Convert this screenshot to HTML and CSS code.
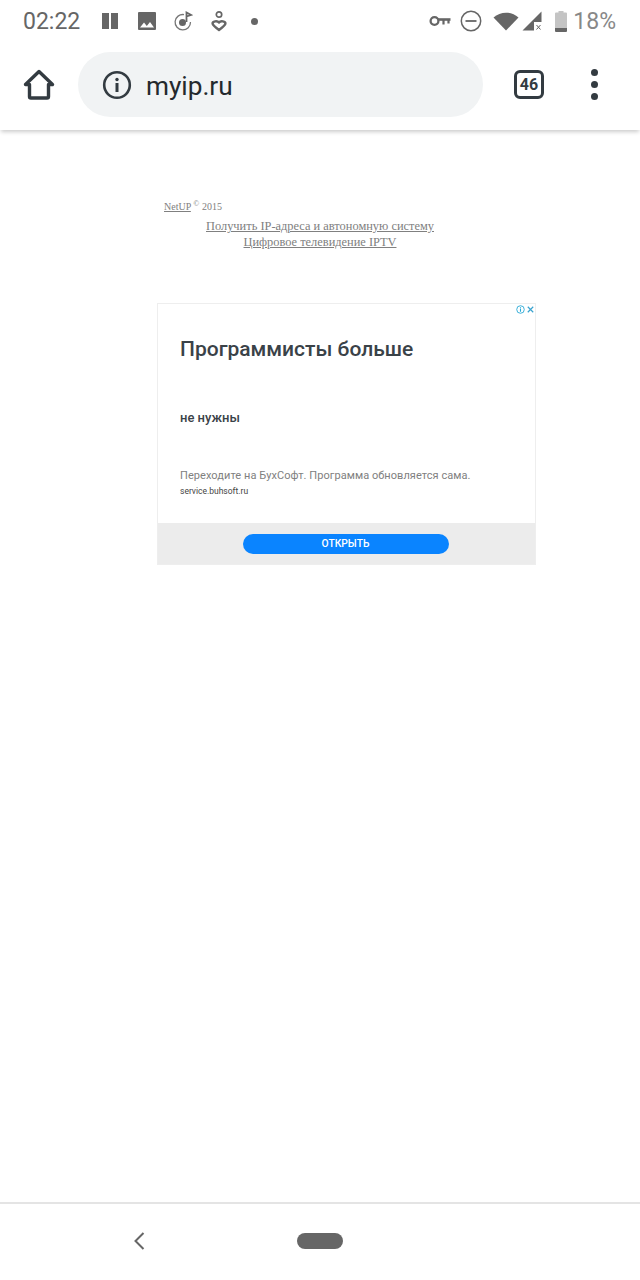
FILE: index.html
```html
<!DOCTYPE html>
<html lang="en">
<head>
    <meta charset="UTF-8">
    <title>myip.ru</title>
    <link rel="stylesheet" href="styles.css">
</head>
<body>
    <div class="phone">
        <div class="status-bar">
            <span class="clock">02:22</span>
            <div class="status-left">
                <svg class="ic" width="16" height="16" viewBox="0 0 16 16"><path fill="#666" d="M0 0h7v16H0zM9 0h7v16H9z"/></svg>
                <svg class="ic photo" width="18" height="18" viewBox="0 0 18 18"><path fill="#666" fill-rule="evenodd" d="M0 1a1 1 0 0 1 1-1h16a1 1 0 0 1 1 1v16a1 1 0 0 1-1 1H1a1 1 0 0 1-1-1zM2 15.500h14l-4-5.500-3.200 4L6 10.500z"/></svg>
                <svg class="ic music" width="20" height="20" viewBox="0 0 20 20"><path fill="none" stroke="#777" stroke-width="1.300" d="M11 3.600A7.700 7.700 0 1 0 17.500 11"/><circle cx="9.500" cy="11.500" r="3.500" fill="#666"/><path fill="none" stroke="#666" stroke-width="1.800" d="M13.500 11V1.500l4.500 2.500-4.500 1.500"/></svg>
                <svg class="ic heart" width="20" height="22" viewBox="0 0 20 22"><circle cx="10" cy="4.500" r="2.700" fill="none" stroke="#666" stroke-width="1.700"/><path fill="none" stroke="#666" stroke-width="2.400" stroke-linejoin="round" d="M10 12.500c-1.500-2-6.800-1.500-6.400 1.300.3 1.500 4.400 4.700 6.400 6.200 2-1.500 6.100-4.700 6.400-6.200.4-2.800-4.900-3.300-6.400-1.300z"/></svg>
                <span class="dot"></span>
            </div>
            <div class="status-right">
                <svg class="ic" width="22" height="12" viewBox="0 0 22 12"><circle cx="5.500" cy="6" r="3.900" fill="none" stroke="#666" stroke-width="2.300"/><path fill="none" stroke="#666" stroke-width="2.600" d="M9 4.500h12.500"/><path fill="none" stroke="#666" stroke-width="2.200" d="M14.500 5v4.500M19.500 5v3.500"/></svg>
                <svg class="ic minus" width="22" height="22" viewBox="0 0 22 22"><circle cx="11" cy="11" r="9.700" fill="none" stroke="#666" stroke-width="1.500"/><path stroke="#666" stroke-width="1.800" d="M5.500 11h11"/></svg>
                <svg class="ic wifi" width="26" height="20" viewBox="0 0 26 20"><path fill="#666" d="M0.500 6.500C7.500 0 18.500 0 25.500 6.500L13 19.500z"/></svg>
                <svg class="ic signal" width="20" height="20" viewBox="0 0 20 20"><path fill="#666" d="M19.500 0.500V11H12v8.500H0.500z"/><path stroke="#666" stroke-width="1" d="M14.500 14l4 4.500M18.500 14l-4 4.500"/></svg>
                <svg class="ic battery" width="12" height="21" viewBox="0 0 12 21"><path fill="#c4c4c4" d="M3.500 0h5v1.500H11a1 1 0 0 1 1 1V17H0V2.500a1 1 0 0 1 1-1h2.500z"/><path fill="#666" d="M0 17h12v3a1 1 0 0 1-1 1H1a1 1 0 0 1-1-1z"/></svg>
                <span class="battery-text">18%</span>
            </div>
        </div>

        <div class="toolbar">
            <svg class="home" width="32" height="32" viewBox="0 0 32 32"><path fill="none" stroke="#333b41" stroke-width="3.400" stroke-linejoin="round" d="M2.500 15.500 16 2.500l13.500 13H25.500v12a1.500 1.500 0 0 1-1.500 1.500H8a1.500 1.500 0 0 1-1.500-1.500v-12z"/></svg>
            <div class="omnibox">
                <svg width="30" height="30" viewBox="0 0 30 30"><circle cx="15" cy="15" r="12.800" fill="none" stroke="#333b41" stroke-width="2.600"/><circle cx="15" cy="9.500" r="1.700" fill="#333b41"/><path fill="#333b41" d="M13.500 13h3v9h-3z"/></svg>
                <span class="url">myip.ru</span>
            </div>
            <div class="tabs">46</div>
            <div class="menu"><span></span><span></span><span></span></div>
        </div>

        <div class="page">
            <div class="credits">
                <p class="copy"><a href="#">NetUP</a> <sup>©</sup> 2015</p>
                <p class="links"><a href="#">Получить IP-адреса и автономную систему</a></p>
                <p class="links"><a href="#">Цифровое телевидение IPTV</a></p>
            </div>

            <div class="ad">
                <div class="ad-badge">
                    <svg width="9" height="9" viewBox="0 0 10 10"><circle cx="5" cy="5" r="4.200" fill="none" stroke="#29a9d6" stroke-width="1"/><path stroke="#29a9d6" stroke-width="1.200" d="M5 2.500v1M5 4.300v3.200"/></svg>
                    <svg width="7" height="7" viewBox="0 0 9 9"><path stroke="#3aa3cf" stroke-width="1.500" d="M1 1l7 7M8 1 1 8"/></svg>
                </div>
                <div class="ad-body">
                    <h2>Программисты больше</h2>
                    <h3>не нужны</h3>
                    <p class="ad-desc">Переходите на БухСофт. Программа обновляется сама.</p>
                    <p class="ad-site">service.buhsoft.ru</p>
                </div>
                <div class="ad-foot">
                    <div class="ad-btn">ОТКРЫТЬ</div>
                </div>
            </div>
        </div>

        <div class="nav-bar">
            <svg class="back" width="12" height="18" viewBox="0 0 12 18"><path fill="none" stroke="#666" stroke-width="2" d="M10.500 1 2.500 9l8 8"/></svg>
            <span class="pill"></span>
        </div>
    </div>
</body>
</html>
```

FILE: styles.css
```css
* {
    margin: 0;
    padding: 0;
    box-sizing: border-box;
}

body {
    font-family: Roboto, sans-serif;
    background: white;
}

.phone {
    width: 640px;
    height: 1280px;
    display: flex;
    flex-direction: column;
    overflow: hidden;
}

/* status bar */
.status-bar {
    height: 42px;
    padding: 0 24px 0 23px;
    display: flex;
    align-items: center;
    color: #666;
    flex-shrink: 0;
}

.clock {
    font-size: 23px;
    width: 79px;
}

.status-left {
    display: flex;
    align-items: center;
}

.status-right {
    margin-left: auto;
    display: flex;
    align-items: center;
}

.ic {
    display: block;
}

.photo {
    margin-left: 20px;
}

.music {
    margin-left: 17px;
}

.heart {
    margin-left: 16px;
}

.dot {
    width: 7px;
    height: 7px;
    margin-left: 22px;
    border-radius: 50%;
    background: #666;
}

.minus {
    margin-left: 9px;
}

.wifi {
    margin-left: 11px;
}

.signal {
    margin-left: 3px;
}

.battery {
    margin-left: 13px;
}

.battery-text {
    font-size: 23px;
    color: #888;
    margin-left: 6px;
}

/* toolbar */
.toolbar {
    height: 88px;
    padding: 10px 0 13px 23px;
    display: flex;
    align-items: center;
    flex-shrink: 0;
    box-shadow: 0 3px 4px -1px rgba(0, 0, 0, 0.2);
    position: relative;
}

.omnibox {
    width: 405px;
    height: 65px;
    margin-left: 23px;
    padding-left: 24px;
    border-radius: 33px;
    background: #f1f3f4;
    display: flex;
    align-items: center;
    gap: 14px;
}

.url {
    font-size: 26.200px;
    margin-top: 3px;
    color: #24292d;
}

.tabs {
    width: 30px;
    height: 29px;
    margin-left: 31px;
    border: 3px solid #333b41;
    border-radius: 6px;
    font-size: 16px;
    font-weight: 700;
    color: #333b41;
    display: flex;
    align-items: center;
    justify-content: center;
}

.menu {
    margin-left: 47px;
    display: flex;
    flex-direction: column;
    gap: 5px;
}

.menu span {
    width: 7px;
    height: 7px;
    border-radius: 50%;
    background: #333b41;
}

/* page */
.page {
    flex: 1;
    padding: 70px 0 0 157px;
}

.credits {
    width: 326px;
    font-family: "Liberation Serif", serif;
    color: #808080;
}

.credits a {
    color: #808080;
}

.copy {
    font-size: 10px;
    line-height: 14px;
    padding-left: 7px;
    margin-bottom: 4px;
}

.copy sup {
    font-size: 8px;
    line-height: 0;
}

.links {
    font-size: 12.400px;
    line-height: 16px;
    text-align: center;
}

.ad {
    width: 379px;
    height: 262px;
    margin-top: 53px;
    border: 1px solid #eeeeee;
    display: flex;
    flex-direction: column;
    position: relative;
}

.ad-badge {
    position: absolute;
    top: 1px;
    right: 1px;
    display: flex;
    align-items: center;
    gap: 2px;
}

.ad-body {
    flex: 1;
    padding: 32px 0 0 22px;
}

.ad-body h2 {
    font-size: 21px;
    font-weight: 500;
    line-height: 26px;
    color: #3a4248;
}

.ad-body h3 {
    font-size: 13px;
    font-weight: 500;
    line-height: 18px;
    color: #3a4248;
    margin-top: 47px;
}

.ad-desc {
    font-size: 11px;
    line-height: 14px;
    letter-spacing: 0.06px;
    color: #808080;
    margin-top: 42px;
}

.ad-site {
    font-size: 8.500px;
    line-height: 12px;
    color: #444;
    margin-top: 2px;
}

.ad-foot {
    height: 41px;
    padding-right: 2px;
    background: #ececec;
    display: flex;
    align-items: center;
    justify-content: center;
}

.ad-btn {
    width: 206px;
    height: 20px;
    border-radius: 10px;
    background: #0a84ff;
    color: white;
    font-size: 10.300px;
    font-weight: 500;
    line-height: 20px;
    text-align: center;
}

/* bottom nav */
.nav-bar {
    height: 78px;
    padding: 0 0 2px 133px;
    border-top: 2px solid #e4e4e4;
    display: flex;
    align-items: center;
    flex-shrink: 0;
}

.pill {
    width: 46px;
    height: 16px;
    margin-left: 152px;
    border-radius: 8px;
    background: #666;
}
```
